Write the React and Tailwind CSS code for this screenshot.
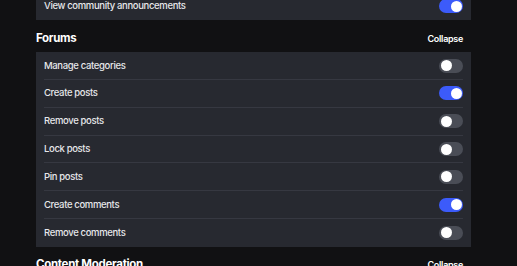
import React, { useState } from "react";

const forumPerms = [
  { label: "Manage categories", on: false },
  { label: "Create posts", on: true },
  { label: "Remove posts", on: false },
  { label: "Lock posts", on: false },
  { label: "Pin posts", on: false },
  { label: "Create comments", on: true },
  { label: "Remove comments", on: false },
];

function Toggle({ on, onClick }) {
  return (
    <button
      onClick={onClick}
      className={`relative w-[24px] h-[14px] rounded-full transition ${on ? "bg-[#3c5bfa]" : "bg-[#4a4d56]"}`}
    >
      <span
        className={`absolute top-[1.5px] w-[11px] h-[11px] rounded-full bg-white transition-all ${on ? "left-[11.5px]" : "left-[1.5px]"}`}
      />
    </button>
  );
}

function PermRow({ label, on, onToggle, last }) {
  return (
    <div className="px-2">
      <div
        className={`h-[27.8px] flex items-center justify-between ${last ? "" : "border-b border-[#363841]"}`}
      >
        <span className="text-[9.5px] font-medium tracking-[-0.35px] text-[#e6e7ea]">{label}</span>
        <Toggle on={on} onClick={onToggle} />
      </div>
    </div>
  );
}

function SectionHeader({ title }) {
  return (
    <div className="h-[32px] pt-[4px] flex items-center justify-between">
      <h3 className="text-[11.5px] font-bold tracking-[-0.3px] text-white">{title}</h3>
      <button className="pr-2 text-[9px] font-semibold tracking-[-0.3px] text-white">Collapse</button>
    </div>
  );
}

export default function App() {
  const [perms, setPerms] = useState(forumPerms);
  const [announce, setAnnounce] = useState(true);

  const toggle = (i) =>
    setPerms((p) => p.map((x, j) => (j === i ? { ...x, on: !x.on } : x)));

  return (
    <div
      className="min-h-screen bg-[#111113] overflow-hidden"
      style={{ fontFamily: "Inter, 'Noto Sans', sans-serif" }}
    >
      <div className="ml-[36px] w-[435px] -mt-[7.5px]">
        {/* previous section */}
        <div className="bg-[#272930]">
          <PermRow
            label="View community announcements"
            on={announce}
            onToggle={() => setAnnounce(!announce)}
            last
          />
        </div>

        <SectionHeader title="Forums" />
        <div className="bg-[#272930]">
          {perms.map((p, i) => (
            <PermRow
              key={p.label}
              label={p.label}
              on={p.on}
              onToggle={() => toggle(i)}
              last={i === perms.length - 1}
            />
          ))}
        </div>

        <SectionHeader title="Content Moderation" />
      </div>
    </div>
  );
}
